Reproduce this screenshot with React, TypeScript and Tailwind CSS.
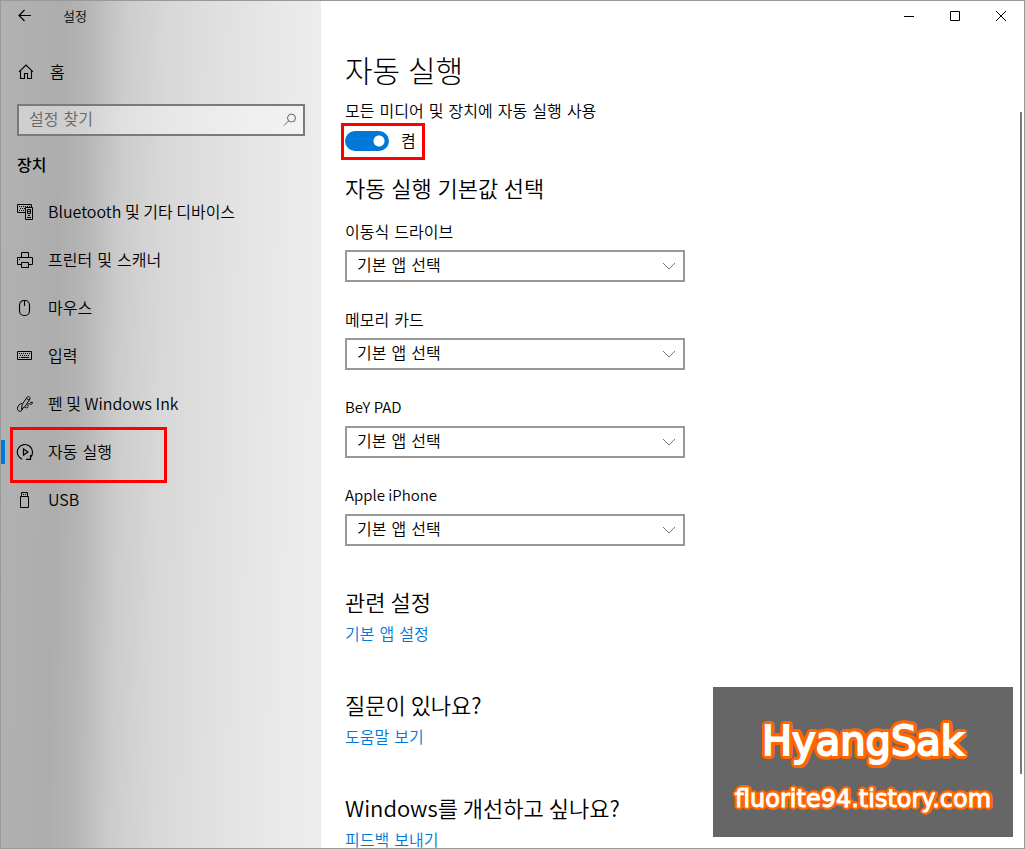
import type { ReactNode } from "react";

const svgProps = {
  width: 18,
  height: 18,
  viewBox: "0 0 18 18",
  fill: "none",
  stroke: "currentColor",
  strokeWidth: 1,
  "aria-hidden": true,
} as const;

const BackIcon = () => (
  <svg {...svgProps} strokeWidth={1.2}>
    <path d="M3 8.5H15M8.5 3L3 8.5L8.5 14" />
  </svg>
);

const HomeIcon = () => (
  <svg {...svgProps} strokeWidth={1.1}>
    <path d="M2 8.8L9 2L16 8.8M3.5 7.5V15.5H7.5V10.5H10.5V15.5H14.5V7.5" />
  </svg>
);

const DevicesIcon = () => (
  <svg {...svgProps}>
    <path d="M9 9.5H1.5V1.5H15.5V4" />
    <path d="M3 3.5H14M4 5.5H9M3 7.5H9" strokeDasharray="1 1" />
    <path d="M9.5 4.5H16.5V16.5H9.5Z" />
    <path d="M11.5 6.5H14.5V10.5H11.5Z" />
    <path d="M12 8.5H14M12 12.5H14M11 14.5H15" />
  </svg>
);

const PrinterIcon = () => (
  <svg {...svgProps}>
    <path d="M5.5 6.5V1.5H12.5V6.5M5 13.5H1.5V6.5H16.5V13.5H13M5.5 11.5H12.5V16.5H5.5ZM3 8.5H4" />
  </svg>
);

const MouseIcon = () => (
  <svg {...svgProps} strokeWidth={1.1}>
    <rect x="3.5" y="1.5" width="10" height="15" rx="4.5" />
    <path d="M8.5 1.5V7" />
  </svg>
);

const KeyboardIcon = () => (
  <svg {...svgProps}>
    <path d="M1.5 4.5H15.5V12.5H1.5Z" />
    <path d="M3 6.5H14M4 8.5H14M3 10.5H5M12 10.5H14" strokeDasharray="1 1" />
    <path d="M5 10.5H12" />
  </svg>
);

const PenIcon = () => (
  <svg {...svgProps}>
    <path d="M5.5 14.2L6.2 9.6L11 2.2C12 0.6 14.8 2 13.9 3.9L9 11.6L5.5 14.2ZM10.3 3.4L13.2 5.2" />
    <path d="M6.2 8.3C3 8.8 1.4 11.5 1.5 13.8C1.6 17 6 17.4 6.5 13.6" />
    <path d="M8.8 12C11 13.6 12.4 12.6 11.9 10.6C11.6 8.8 13 8.1 13.9 8.9C14.8 9.8 16.4 9.4 16.5 7.3H14.2" />
  </svg>
);

const AutoPlayIcon = () => (
  <svg {...svgProps} strokeWidth={1.2}>
    <path d="M6.2 16.2A7.6 7.6 0 1 1 14 14.8M10 16.4H14.5V12" />
    <path d="M7.5 5.9L12 9L7.5 12.1Z" />
  </svg>
);

const UsbIcon = () => (
  <svg {...svgProps}>
    <path d="M4.5 5.5H12.5V16.5H4.5ZM5.5 5.5V1.5H11.5V5.5M7 3.5H8M9 3.5H10" />
  </svg>
);

type TextItem = { label: string; latin?: boolean };

const latinFont = "font-['Noto_Sans_CJK_KR',sans-serif]";

const navItems: (TextItem & { icon: ReactNode; active?: boolean })[] = [
  { label: "Bluetooth 및 기타 디바이스", icon: <DevicesIcon />, latin: true },
  { label: "프린터 및 스캐너", icon: <PrinterIcon /> },
  { label: "마우스", icon: <MouseIcon /> },
  { label: "입력", icon: <KeyboardIcon /> },
  { label: "펜 및 Windows Ink", icon: <PenIcon />, latin: true },
  { label: "자동 실행", icon: <AutoPlayIcon />, active: true },
  { label: "USB", icon: <UsbIcon />, latin: true },
];

const drives: (TextItem & { id: string })[] = [
  { id: "removable", label: "이동식 드라이브" },
  { id: "memory-card", label: "메모리 카드" },
  { id: "bey-pad", label: "BeY PAD", latin: true },
  { id: "iphone", label: "Apple iPhone", latin: true },
];

const footerLinks = [
  { title: "관련 설정", link: "기본 앱 설정" },
  { title: "질문이 있나요?", link: "도움말 보기" },
  { title: "Windows를 개선하고 싶나요?", link: "피드백 보내기" },
];

function Sidebar() {
  return (
    <aside className="w-80 shrink-0 bg-[linear-gradient(91deg,#b2b2b2_0%,#adadad_18%,#b5b5b5_26%,#cccccc_37%,#d8d8d8_50%,#e2e2e2_70%,#eaeaea_88%,#ededed_100%)]">
      <div className="flex h-[29px] items-center gap-[29px] pl-[15px]">
        <button type="button" aria-label="뒤로">
          <BackIcon />
        </button>
        <span className="pt-0.5 text-[13px]">설정</span>
      </div>
      <a href="#home" className="mt-[18px] flex h-12 items-center gap-[15px] pl-4">
        <HomeIcon />
        <span className="pt-0.5">홈</span>
      </a>
      <form className="relative mx-4 mt-2">
        <input
          type="search"
          aria-label="설정 찾기"
          placeholder="설정 찾기"
          className="h-8 w-full appearance-none border-2 border-[#7a7a7a] bg-white/40 pr-9 pb-[2px] pl-2.5 outline-none placeholder:text-[#666]"
        />
        <svg
          width="14"
          height="14"
          viewBox="0 0 14 14"
          fill="none"
          stroke="#666"
          className="absolute top-[9px] right-2"
          aria-hidden="true"
        >
          <circle cx="8.5" cy="5" r="4" />
          <path d="M5.6 7.9L0.8 12.7" />
        </svg>
      </form>
      <h2 className="mt-[18px] pl-4 leading-6 font-medium">장치</h2>
      <nav className="mt-2.5">
        <ul>
          {navItems.map((item) => (
            <li key={item.label} className="relative">
              <a
                href="#device"
                aria-current={item.active ? "page" : undefined}
                className="flex h-12 items-center gap-[14px] pl-[15px]"
              >
                {item.icon}
                <span className={item.latin ? `pb-0.5 ${latinFont}` : "pt-0.5"}>{item.label}</span>
              </a>
              {item.active && (
                <>
                  <span className="absolute top-3 left-0 h-6 w-1 bg-[#0078d7]" />
                  <span className="absolute -top-px left-[9px] h-14 w-[157px] border-3 border-[#ff0000]" />
                </>
              )}
            </li>
          ))}
        </ul>
      </nav>
    </aside>
  );
}

function WindowButtons() {
  return (
    <div className="flex h-[30px] justify-end">
      <button type="button" aria-label="최소화" className="grid w-[46px] place-items-center">
        <svg width="10" height="10" stroke="#000" aria-hidden="true">
          <path d="M0 5.5H10" />
        </svg>
      </button>
      <button type="button" aria-label="최대화" className="grid w-[46px] place-items-center">
        <svg width="10" height="10" stroke="#000" fill="none" aria-hidden="true">
          <path d="M0.5 0.5H9.5V9.5H0.5Z" />
        </svg>
      </button>
      <button type="button" aria-label="닫기" className="grid w-[46px] place-items-center">
        <svg width="10" height="10" stroke="#000" aria-hidden="true">
          <path d="M0 0L10 10M10 0L0 10" />
        </svg>
      </button>
    </div>
  );
}

function DriveSelect({ id, label, latin }: { id: string; label: string; latin?: boolean }) {
  return (
    <div className="w-[340px] max-w-full">
      <label
        htmlFor={id}
        className={latin ? `block pb-1 text-[15px] leading-4 ${latinFont}` : "block"}
      >
        {label}
      </label>
      <div className="relative mt-[7px]">
        <select
          id={id}
          className="block h-8 w-full appearance-none border-2 border-[#999] bg-white pr-8 pl-2.5 outline-none"
        >
          <option>기본 앱 선택</option>
        </select>
        <svg
          width="14"
          height="8"
          fill="none"
          stroke="#777"
          className="pointer-events-none absolute top-3 right-[9px]"
          aria-hidden="true"
        >
          <path d="M1 1L7 7L13 1" />
        </svg>
      </div>
    </div>
  );
}

function Watermark() {
  return (
    <div className="absolute right-[11px] bottom-[11px] flex h-[150px] w-[300px] flex-col items-center bg-[#666] pt-6 font-['DejaVu_Sans',sans-serif] font-normal text-white">
      <p className="text-[40px] leading-[60px] [-webkit-text-stroke:2px_#fff] [text-shadow:4px_0_#ff6600,-4px_0_#ff6600,0_4px_#ff6600,0_-4px_#ff6600,3px_3px_#ff6600,-3px_3px_#ff6600,3px_-3px_#ff6600,-3px_-3px_#ff6600,4px_2px_#ff6600,-4px_2px_#ff6600,4px_-2px_#ff6600,-4px_-2px_#ff6600,2px_4px_#ff6600,-2px_4px_#ff6600,2px_-4px_#ff6600,-2px_-4px_#ff6600]">
        HyangSak
      </p>
      <p className="mt-2 text-[24px] leading-10 [-webkit-text-stroke:1px_#fff] [text-shadow:3px_0_#ff6600,-3px_0_#ff6600,0_3px_#ff6600,0_-3px_#ff6600,2px_2px_#ff6600,-2px_2px_#ff6600,2px_-2px_#ff6600,-2px_-2px_#ff6600,3px_1px_#ff6600,-3px_1px_#ff6600,3px_-1px_#ff6600,-3px_-1px_#ff6600]">
        fluorite94.tistory.com
      </p>
    </div>
  );
}

export default function App() {
  return (
    <div className="relative flex h-screen overflow-hidden border border-[#999] bg-white font-['DejaVu_Sans','Noto_Sans_CJK_KR',sans-serif] text-base leading-5 font-[350] text-black">
      <Sidebar />
      <main className="min-w-0 flex-1">
        <WindowButtons />
        <div className="px-6">
          <h1 className="mt-5 font-['Noto_Sans','Noto_Sans_CJK_KR',sans-serif] text-[30px] leading-10 font-light">
            자동 실행
          </h1>
          <p className="mt-[11px]" id="autoplay-label">
            모든 미디어 및 장치에 자동 실행 사용
          </p>
          <div className="relative mt-[9px] flex w-fit">
            <label className="flex h-5 items-center gap-3">
              <input
                type="checkbox"
                role="switch"
                defaultChecked
                aria-describedby="autoplay-label"
                className="h-5 w-11 appearance-none rounded-full bg-[#999] bg-[radial-gradient(circle_at_34px_10px,#fff_5px,transparent_6px)] checked:bg-[#0078d7]"
              />
              <span className="pt-0.5">켬</span>
            </label>
            <span className="pointer-events-none absolute -top-2 -left-1 h-[37px] w-[84px] border-3 border-[#ff0000]" />
          </div>
          <h2 className="mt-[23px] font-['Noto_Sans','Noto_Sans_CJK_KR',sans-serif] text-[22px] leading-7">
            자동 실행 기본값 선택
          </h2>
          <div className="mt-[21px] flex flex-col gap-[29px]">
            {drives.map((drive) => (
              <DriveSelect key={drive.id} {...drive} />
            ))}
          </div>
          <div className="mt-[41px] flex flex-col gap-[45px]">
            {footerLinks.map((item) => (
              <section key={item.title}>
                <h2 className="font-['Noto_Sans_CJK_KR',sans-serif] text-[22px] leading-7">
                  {item.title}
                </h2>
                <a href="#more" className="mt-2.5 block w-fit text-[#0078d7]">
                  {item.link}
                </a>
              </section>
            ))}
          </div>
        </div>
      </main>
      <span className="absolute top-[111px] right-[2px] h-[662px] w-[2px] bg-[#7a7a7a]" />
      <Watermark />
    </div>
  );
}
